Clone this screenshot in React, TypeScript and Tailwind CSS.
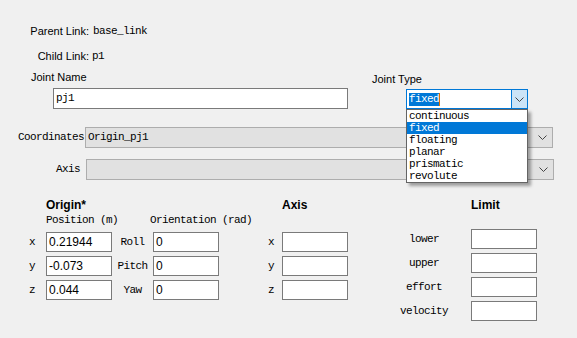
import React from 'react';

const sans = "font-['Liberation_Sans',Arial,sans-serif] text-[11px]";
const mono = "font-['Liberation_Mono','Courier_New',monospace] text-[11px] tracking-[-0.6px]";

const jointTypes = ['continuous', 'fixed', 'floating', 'planar', 'prismatic', 'revolute'];

function Chevron() {
  return (
    <svg width="9" height="5" viewBox="0 0 9 5" fill="none">
      <polyline points="0.5,0.5 4.5,4.5 8.5,0.5" stroke="#444" strokeWidth="1" />
    </svg>
  );
}

// 흰색 입력칸
function Field({ value = '', w = 'w-[66px]' }: { value?: string; w?: string }) {
  return (
    <div className={`${w} h-[20px] bg-white border border-[#7a7a7a] flex items-center pl-[2px] ${sans} text-[12px] text-black leading-none`}>
      {value}
    </div>
  );
}

export default function App() {
  return (
    <div className="w-[577px] h-[338px] bg-[#f0f0f0] overflow-hidden text-black">
      {/* Parent / Child */}
      <div className="pt-[24px]">
        <div className="flex items-center h-[15px]">
          <div className={`w-[89px] text-right ${sans}`}>Parent Link:</div>
          <div className={`pl-[4px] ${mono}`}>base_link</div>
        </div>
        <div className="flex items-center h-[15px] mt-[10px]">
          <div className={`w-[89px] text-right ${sans}`}>Child Link:</div>
          <div className={`pl-[3px] ${mono}`}>p1</div>
        </div>
      </div>

      {/* Joint name / type */}
      <div className="flex items-start mt-[6px]">
        <div className="w-[348px]">
          <div className={`h-[14px] pl-[31px] leading-[14px] ${sans}`}>Joint Name</div>
          <div className="ml-[53px] mt-[4px] w-[295px] h-[21px] bg-white border border-[#7a7a7a] flex items-center pl-[2px]">
            <span className={mono}>pj1</span>
          </div>
        </div>
        <div className="ml-[24px] pt-[2px]">
          <div className={`h-[14px] leading-[14px] ${sans}`}>Joint Type</div>
          <div className="relative ml-[34px] mt-[3px] w-[122px] h-[20px] bg-white border border-[#0078d7] flex">
            <div className="flex-1 flex items-center pl-[2px]">
              <span className={`bg-[#0078d7] text-white leading-[13px] ${mono}`}>fixed</span>
              <span className="w-px h-[13px] bg-[#e07000]" />
            </div>
            <div className="w-[16px] bg-[#cce4f7] border-l border-[#0078d7] flex items-center justify-center">
              <Chevron />
            </div>
            {/* 펼쳐진 목록 */}
            <div className="absolute left-[-1px] top-[19px] w-[122px] bg-white border border-[#646464] shadow-[3px_3px_3px_rgba(0,0,0,0.35)] z-10">
              {jointTypes.map((t) => (
                <div
                  key={t}
                  className={`h-[12px] leading-[12px] pl-[2px] ${mono} ${t === 'fixed' ? 'bg-[#0078d7] text-white' : ''}`}
                >
                  {t}
                </div>
              ))}
            </div>
          </div>
        </div>
      </div>

      {/* Coordinates / Axis */}
      <div className="flex items-center mt-[18px]">
        <div className={`w-[85px] text-right pr-[1px] ${mono}`}>Coordinates</div>
        <div className="w-[468px] h-[21px] bg-[#e1e1e1] border border-[#adadad] flex items-center justify-between pl-[2px] pr-[5px]">
          <span className={mono}>Origin_pj1</span>
          <Chevron />
        </div>
      </div>
      <div className="flex items-center mt-[11px]">
        <div className={`w-[86px] text-right pr-[6px] ${mono}`}>Axis</div>
        <div className="w-[468px] h-[21px] bg-[#e1e1e1] border border-[#adadad] flex items-center justify-end pr-[5px]">
          <Chevron />
        </div>
      </div>

      {/* Origin / Axis / Limit */}
      <div className="flex items-start mt-[17px]">
        <div className="ml-[29px] w-[190px] shrink-0">
          <div className={`h-[16px] pl-[17px] font-bold ${sans} text-[12px] leading-[16px]`}>Origin*</div>
          <div className="flex h-[14px] items-center whitespace-nowrap">
            <span className={`ml-[17px] w-[104px] shrink-0 ${mono}`}>Position (m)</span>
            <span className={mono}>Orientation (rad)</span>
          </div>
          <div className="mt-[5px] flex flex-col gap-[4px]">
            {[
              ['x', '0.21944', 'Roll'],
              ['y', '-0.073', 'Pitch'],
              ['z', '0.044', 'Yaw'],
            ].map(([axis, pos, ori]) => (
              <div key={axis} className="flex items-center">
                <span className={`w-[17px] ${mono}`}>{axis}</span>
                <Field value={pos} />
                <span className={`w-[41px] text-center ${mono}`}>{ori}</span>
                <Field value="0" />
              </div>
            ))}
          </div>
        </div>

        <div className="ml-[49px] w-[80px] shrink-0">
          <div className={`h-[16px] pl-[14px] font-bold ${sans} text-[12px] leading-[16px]`}>Axis</div>
          <div className="mt-[19px] flex flex-col gap-[4px]">
            {['x', 'y', 'z'].map((a) => (
              <div key={a} className="flex items-center">
                <span className={`w-[14px] ${mono}`}>{a}</span>
                <Field />
              </div>
            ))}
          </div>
        </div>

        <div className="ml-[44px]">
          <div className={`h-[16px] pl-[79px] font-bold ${sans} text-[12px] leading-[16px]`}>Limit</div>
          <div className="mt-[16px] flex flex-col gap-[4px]">
            {['lower', 'upper', 'effort', 'velocity'].map((l) => (
              <div key={l} className="flex items-center">
                <span className={`w-[64px] text-center ${mono}`}>{l}</span>
                <div className="ml-[15px]">
                  <Field />
                </div>
              </div>
            ))}
          </div>
        </div>
      </div>
    </div>
  );
}
